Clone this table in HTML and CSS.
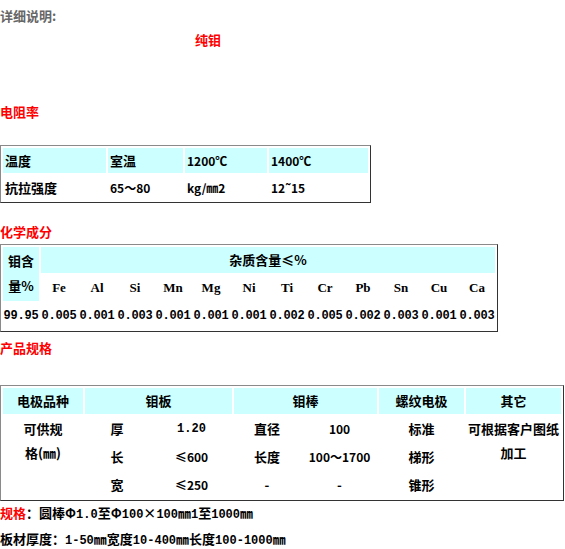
FILE: index.html
```html
<!DOCTYPE html>
<html lang="zh-CN">
<head>
<meta charset="utf-8">
<title>纯钼</title>
<link rel="stylesheet" href="styles.css">
</head>
<body>
<div class="intro">详细说明:</div>
<div class="product-name">纯钼</div>

<div class="section sec-resist">电阻率</div>
<table class="grid t1">
  <colgroup><col class="c103"><col class="c75"><col class="c82"><col class="c99"></colgroup>
  <tr class="head">
    <td>温度</td><td>室温</td><td class="num">1200℃</td><td class="num">1400℃</td>
  </tr>
  <tr>
    <td>抗拉强度</td><td class="num">65～80</td><td class="num">kg/㎜2</td><td class="num">12˜15</td>
  </tr>
</table>

<div class="section sec-chem">化学成分</div>
<table class="grid t2">
  <colgroup><col span="13" class="c36"></colgroup>
  <tr class="head">
    <td rowspan="2" class="stack">钼含<br>量%</td>
    <td colspan="12">杂质含量≤%</td>
  </tr>
  <tr class="elements">
    <td>Fe</td><td>Al</td><td>Si</td><td>Mn</td><td>Mg</td><td>Ni</td><td>Ti</td><td>Cr</td><td>Pb</td><td>Sn</td><td>Cu</td><td>Ca</td>
  </tr>
  <tr class="values">
    <td>99.95</td><td>0.005</td><td>0.001</td><td>0.003</td><td>0.001</td><td>0.001</td><td>0.001</td><td>0.002</td><td>0.005</td><td>0.002</td><td>0.003</td><td>0.001</td><td>0.003</td>
  </tr>
</table>

<div class="section sec-spec">产品规格</div>
<table class="grid t3">
  <colgroup><col class="c80"><col class="c64"><col class="c81"><col class="c66"><col class="c75"><col class="c85"><col class="c95"></colgroup>
  <tr class="head">
    <td>电极品种</td><td colspan="2">钼板</td><td colspan="2">钼棒</td><td>螺纹电极</td><td>其它</td>
  </tr>
  <tr>
    <td rowspan="3" class="stack">可供规<br>格(㎜)</td>
    <td>厚</td><td class="mono">1.20</td>
    <td>直径</td><td class="small">100</td>
    <td>标准</td>
    <td rowspan="3" class="stack">可根据客户图纸<br>加工</td>
  </tr>
  <tr>
    <td>长</td><td class="small">≤600</td>
    <td>长度</td><td class="small">100～1700</td>
    <td>梯形</td>
  </tr>
  <tr>
    <td>宽</td><td class="small">≤250</td>
    <td>-</td><td>-</td>
    <td>锥形</td>
  </tr>
</table>

<div class="note"><span class="red">规格</span>：圆棒Φ<span class="mono">1.0</span>至Φ<span class="mono">100</span>×<span class="mono">100</span>㎜<span class="mono">1</span>至<span class="mono">1000</span>㎜</div>
<div class="note">板材厚度：<span class="mono">1-50</span>㎜宽度<span class="mono">10-400</span>㎜长度<span class="mono">100-1000</span>㎜</div>
</body>
</html>
```

FILE: styles.css
```css
html, body {
  margin: 0;
  padding: 0;
  background: #ffffff;
}

body {
  font-family: "Noto Sans CJK SC", "Noto Sans", sans-serif;
  font-size: 13px;
  font-weight: bold;
  line-height: 24px;
  color: #000000;
}

.intro {
  padding-top: 4px;
  color: #666666;
}

.product-name {
  padding-left: 195px;
  color: #ff0000;
}

.section {
  color: #ff0000;
}

.sec-resist { margin-top: 48px; }
.sec-chem { margin-top: 17px; }
.sec-spec { margin-top: 4px; }

.grid {
  border-collapse: separate;
  border-spacing: 2px;
  border: 1px solid;
  border-color: #8a8a8a #333333 #333333 #8a8a8a;
  table-layout: fixed;
}

.grid td {
  padding: 0 2px;
  height: 26px;
  box-sizing: border-box;
  vertical-align: middle;
  white-space: nowrap;
  overflow: visible;
}

.grid .head td {
  background: #ccffff;
}

/* table 1 */
.t1 {
  width: 371px;
  margin-top: 21px;
}
.t1 td {
  height: 25px;
  text-align: left;
}
.c103 { width: 103px; }
.c75 { width: 75px; }
.c82 { width: 82px; }
.c99 { width: 99px; }

.t1 .num {
  font-size: 12px;
}

/* table 2 */
.t2 {
  width: 498px;
}
.c36 { width: 36px; }
.t2 td {
  padding: 0;
  text-align: center;
}
.t2 .stack {
  vertical-align: top;
  padding-top: 1px;
  line-height: 25px;
}
.t2 .elements td {
  font-family: "Liberation Serif", "DejaVu Serif", serif;
  font-size: 13px;
}
.t2 .values td {
  font-family: "Liberation Mono", "DejaVu Sans Mono", monospace;
  font-size: 12px;
  letter-spacing: -0.2px;
}

/* table 3 */
.t3 {
  width: 564px;
  margin-top: 25px;
}
.c80 { width: 80px; }
.c64 { width: 64px; }
.c81 { width: 81px; }
.c66 { width: 66px; }
.c85 { width: 85px; }
.c95 { width: 95px; }
.t3 td {
  text-align: center;
}
.t3 .stack {
  vertical-align: top;
  padding-top: 1px;
}
.t3 .small {
  font-size: 12px;
}

.mono {
  font-family: "Liberation Mono", "DejaVu Sans Mono", monospace;
  font-size: 12px;
}

.note {
  white-space: nowrap;
}

.red {
  color: #ff0000;
}
```
